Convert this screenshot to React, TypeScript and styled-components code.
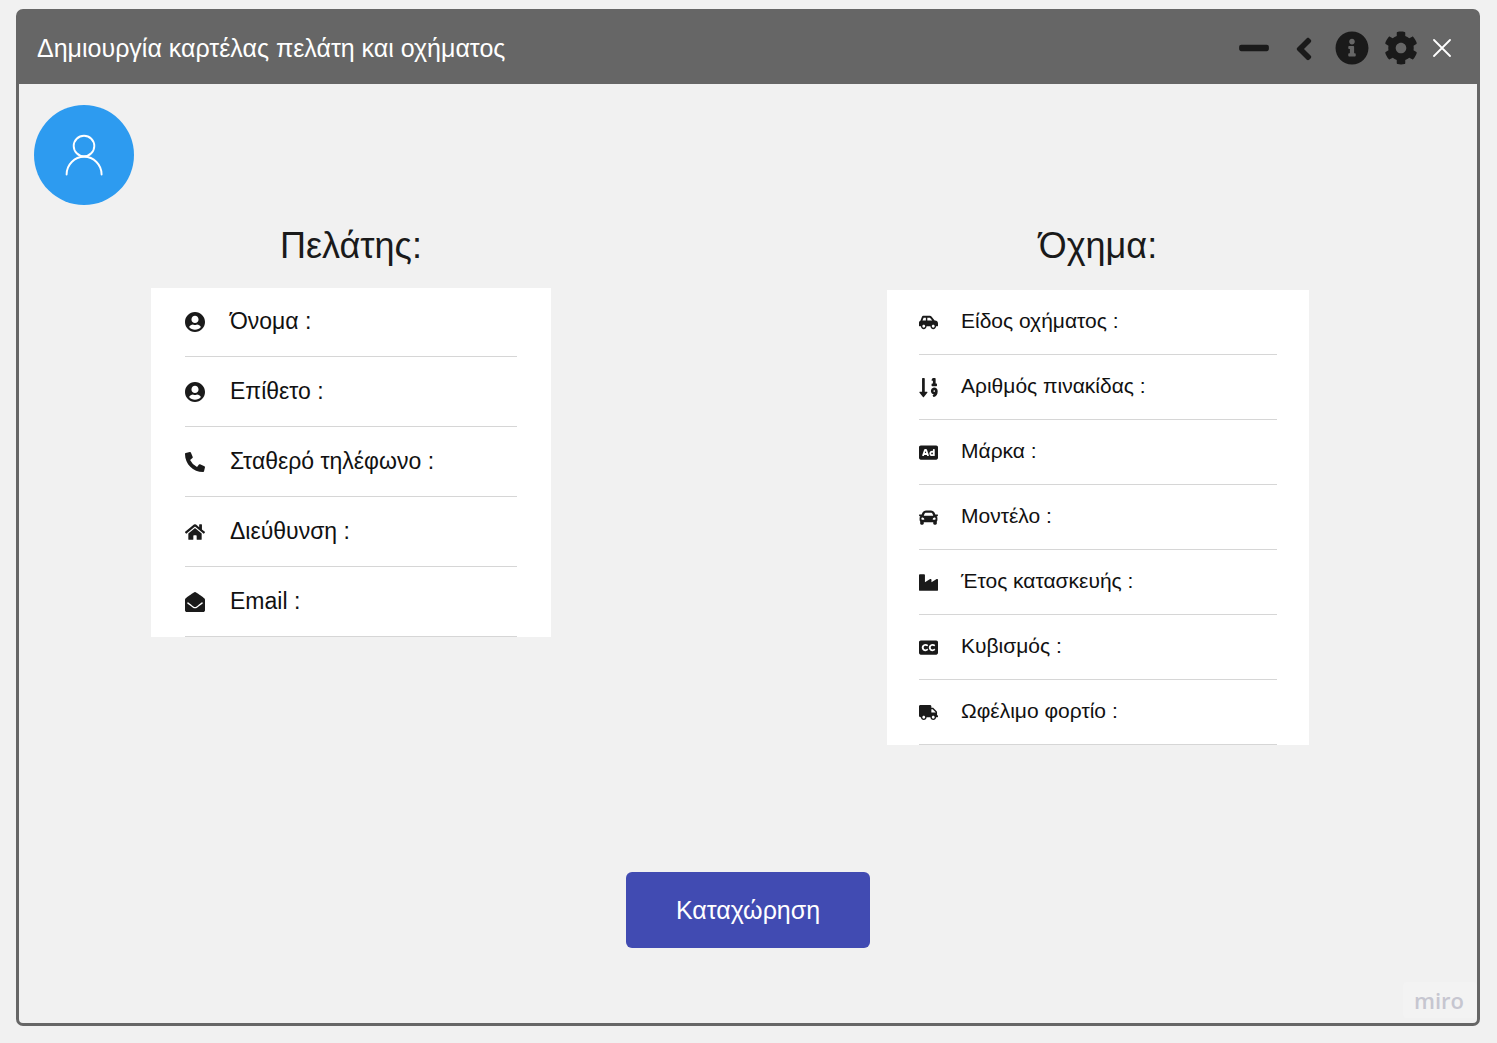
import React from "react";
import styled, { createGlobalStyle } from "styled-components";
import type { IconType } from "react-icons";
import {
  FaAd,
  FaAngleLeft,
  FaCar,
  FaCarSide,
  FaClosedCaptioning,
  FaCog,
  FaEnvelopeOpen,
  FaHome,
  FaIndustry,
  FaInfoCircle,
  FaMinus,
  FaPhoneAlt,
  FaSortNumericDown,
  FaTruck,
  FaUserCircle,
} from "react-icons/fa";

const GlobalStyle = createGlobalStyle`
  *, *::before, *::after { box-sizing: border-box; }
  body {
    margin: 0;
    background: #f1f1f1;
    color: #1a1a1a;
    font-family: "Liberation Sans", Arial, sans-serif;
  }
`;

const Page = styled.div`
  display: flex;
  min-height: 100vh;
  padding: 9px 17px 17px 16px;
`;

const Window = styled.main`
  display: flex;
  flex: 1;
  flex-direction: column;
  border: 3px solid #666;
  border-radius: 7px;
  background: #f1f1f1;
`;

const TitleBar = styled.header`
  display: flex;
  align-items: center;
  justify-content: space-between;
  height: 72px;
  padding: 0 26px 0 18px;
  background: #666;
`;

const Title = styled.h1`
  margin: 0;
  color: #fff;
  font-size: 25px;
  font-weight: 400;
  line-height: 32px;
`;

const Controls = styled.div`
  display: flex;
  align-items: center;
  gap: 15px;
`;

const ControlButton = styled.button<{ $size?: number; $color?: string }>`
  display: grid;
  place-items: center;
  width: ${({ $size = 34 }) => $size}px;
  height: 34px;
  padding: 0;
  border: 0;
  background: none;
  color: ${({ $color = "#1a1a1a" }) => $color};
  cursor: pointer;
`;

const Form = styled.form`
  display: flex;
  flex: 1;
  flex-direction: column;
`;

const Avatar = styled.div`
  width: 100px;
  height: 100px;
  margin: 21px 0 0 15px;
  border-radius: 50%;
  background: #2d9bf0;
`;

const Panels = styled.div`
  display: flex;
  flex-wrap: wrap;
  align-items: flex-start;
  justify-content: space-between;
  gap: 32px;
  padding: 19px 168px 0 132px;
`;

const Panel = styled.section<{ $width: number }>`
  flex: 0 1 ${({ $width }) => $width}px;
`;

const PanelTitle = styled.h2`
  margin: 0;
  font-size: 36px;
  font-weight: 400;
  line-height: 44px;
  text-align: center;
`;

const Card = styled.div<{ $large?: boolean }>`
  margin-top: ${({ $large }) => ($large ? 20 : 22)}px;
  padding: 0 ${({ $large }) => ($large ? 34 : 32)}px;
  background: #fff;
  font-size: ${({ $large }) => ($large ? 23 : 21)}px;
`;

const Row = styled.div<{ $large?: boolean }>`
  display: flex;
  align-items: center;
  gap: ${({ $large }) => ($large ? 25 : 23)}px;
  height: ${({ $large }) => ($large ? 70 : 65)}px;
  border-bottom: 1px solid #d6d6d6;

  &:first-child {
    height: ${({ $large }) => ($large ? 69 : 65)}px;
  }

  & > svg {
    flex: none;
    width: ${({ $large }) => ($large ? 20 : 19)}px;
    height: ${({ $large }) => ($large ? 20 : 19)}px;
  }
`;

const Field = styled.div`
  display: flex;
  flex: 1;
  min-width: 0;
  gap: 8px;
  padding-bottom: 2px;
`;

const Label = styled.label`
  flex: none;
  color: #111;
  line-height: 28px;
`;

const Input = styled.input`
  flex: 1;
  width: 0;
  min-width: 0;
  padding: 0;
  border: 0;
  outline: 0;
  background: transparent;
  color: inherit;
  font: inherit;
`;

const Submit = styled.button`
  align-self: center;
  margin-top: 127px;
  padding: 22px 50px;
  border: 0;
  border-radius: 6px;
  background: #414bb2;
  color: #fff;
  font: 400 25px/32px "Liberation Sans", Arial, sans-serif;
  cursor: pointer;
`;

const Badge = styled.footer`
  align-self: flex-end;
  margin: auto 0 5px;
  padding: 0 13px 0 11px;
  border-radius: 4px;
  background: #f3f3f3;
  color: #c6c6d0;
  font: 600 22px/36px "Open Sans", sans-serif;
`;

type FieldSpec = { id: string; label: string; icon: IconType; type?: string; iconBox?: string };

// The icon boxes trim the glyph's own margin so that every icon fills its column.
const customerFields: FieldSpec[] = [
  { id: "first-name", label: "Όνομα :", icon: FaUserCircle, iconBox: "0 8 496 496" },
  { id: "last-name", label: "Επίθετο :", icon: FaUserCircle, iconBox: "0 8 496 496" },
  { id: "phone", label: "Σταθερό τηλέφωνο :", icon: FaPhoneAlt, type: "tel" },
  { id: "address", label: "Διεύθυνση :", icon: FaHome },
  { id: "email", label: "Email :", icon: FaEnvelopeOpen, type: "email" },
];

const vehicleFields: FieldSpec[] = [
  { id: "vehicle-type", label: "Είδος οχήματος :", icon: FaCarSide },
  { id: "plate", label: "Αριθμός πινακίδας :", icon: FaSortNumericDown, iconBox: "-8 30 448 448" },
  { id: "make", label: "Μάρκα :", icon: FaAd },
  { id: "model", label: "Μοντέλο :", icon: FaCar },
  { id: "year", label: "Έτος κατασκευής :", icon: FaIndustry },
  { id: "engine", label: "Κυβισμός :", icon: FaClosedCaptioning },
  { id: "payload", label: "Ωφέλιμο φορτίο :", icon: FaTruck },
];

function FieldPanel(props: { title: string; width: number; fields: FieldSpec[]; large?: boolean }) {
  const { title, width, fields, large } = props;
  return (
    <Panel $width={width}>
      <PanelTitle>{title}</PanelTitle>
      <Card $large={large}>
        {fields.map(({ id, label, icon: Icon, type = "text", iconBox }) => (
          <Row key={id} $large={large}>
            <Icon aria-hidden color="#1a1a1a" overflow="visible" {...(iconBox ? { viewBox: iconBox } : {})} />
            <Field>
              <Label htmlFor={id}>{label}</Label>
              <Input id={id} name={id} type={type} />
            </Field>
          </Row>
        ))}
      </Card>
    </Panel>
  );
}

export default function App() {
  return (
    <>
      <GlobalStyle />
      <Page>
        <Window>
          <TitleBar>
            <Title>Δημιουργία καρτέλας πελάτη και οχήματος</Title>
            <Controls>
              <ControlButton type="button" aria-label="Ελαχιστοποίηση">
                <FaMinus size={34} />
              </ControlButton>
              <ControlButton type="button" aria-label="Πίσω">
                <FaAngleLeft size={36} />
              </ControlButton>
              <ControlButton type="button" aria-label="Πληροφορίες">
                <FaInfoCircle size={34} />
              </ControlButton>
              <ControlButton type="button" aria-label="Ρυθμίσεις">
                <FaCog size={34} />
              </ControlButton>
              <ControlButton type="button" aria-label="Κλείσιμο" $size={18} $color="#fff">
                <svg width="18" height="18" viewBox="0 0 18 18" stroke="currentColor" strokeWidth="1.8" strokeLinecap="round">
                  <path d="M1 1 L17 17 M17 1 L1 17" />
                </svg>
              </ControlButton>
            </Controls>
          </TitleBar>
          <Form onSubmit={(event) => event.preventDefault()}>
            <Avatar>
              <svg width="100" height="100" viewBox="0 0 100 100" fill="none" stroke="#fff" strokeWidth="1.9" strokeLinecap="round" aria-hidden>
                <circle cx="50" cy="41" r="10.3" />
                <path d="M32.6 69.5 A17.4 17.6 0 0 1 67.6 69.5" />
              </svg>
            </Avatar>
            <Panels>
              <FieldPanel title="Πελάτης:" width={400} fields={customerFields} large />
              <FieldPanel title="Όχημα:" width={422} fields={vehicleFields} />
            </Panels>
            <Submit type="submit">Καταχώρηση</Submit>
            <Badge>miro</Badge>
          </Form>
        </Window>
      </Page>
    </>
  );
}
